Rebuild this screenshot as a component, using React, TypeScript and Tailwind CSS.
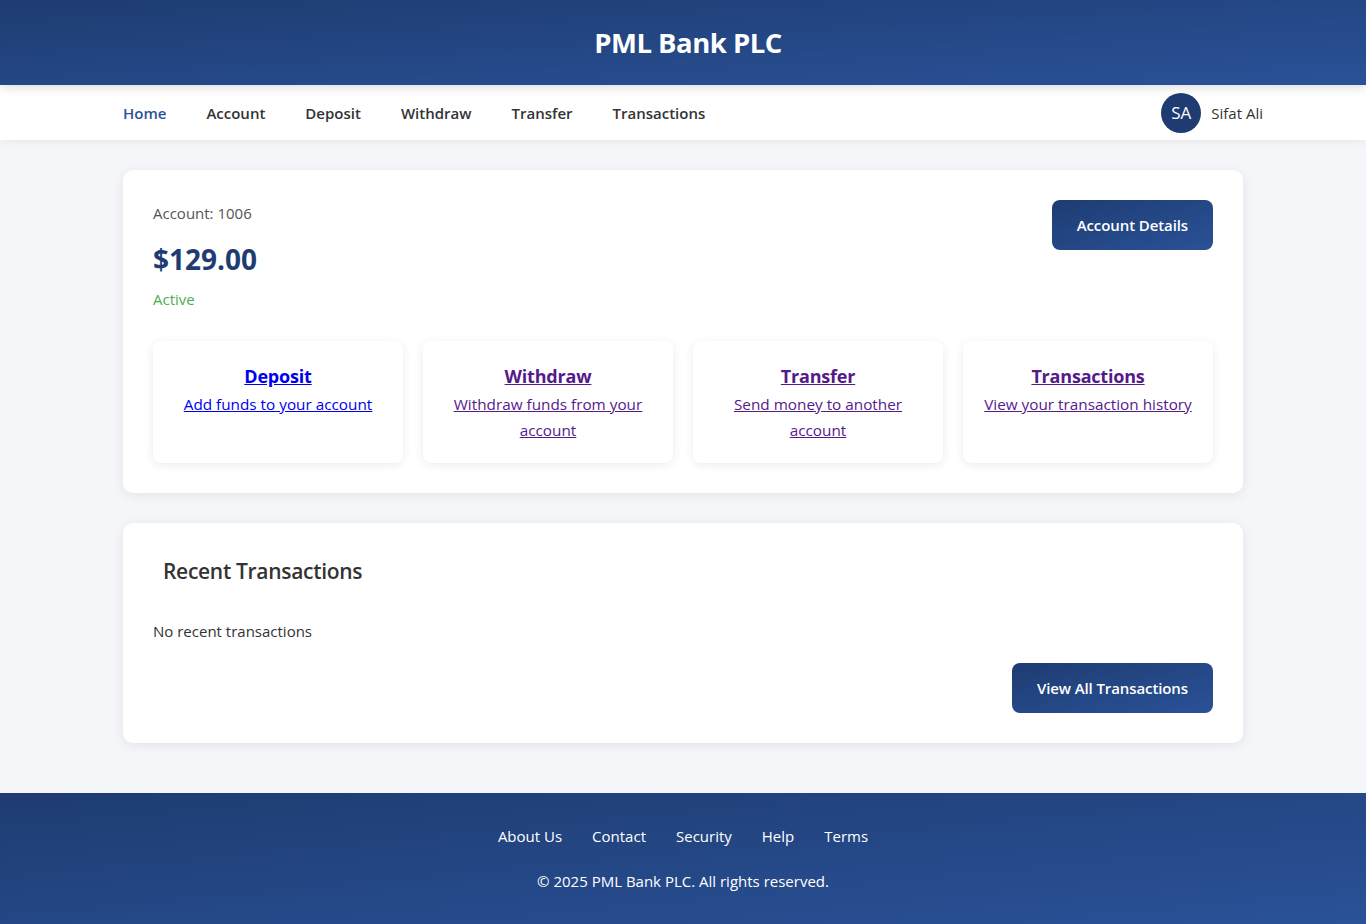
import React from "react";

const navLinks = ["Home", "Account", "Deposit", "Withdraw", "Transfer", "Transactions"];

const actions = [
  { title: "Deposit", desc: "Add funds to your account", visited: false },
  { title: "Withdraw", desc: "Withdraw funds from your account", visited: true },
  { title: "Transfer", desc: "Send money to another account", visited: true },
  { title: "Transactions", desc: "View your transaction history", visited: true },
];

const footerLinks = ["About Us", "Contact", "Security", "Help", "Terms"];

const App = () => {
  return (
    <div
      className="min-h-screen bg-[#f5f6fa] text-[#333] leading-[1.6]"
      style={{ fontFamily: '"Open Sans", "Noto Sans", sans-serif' }}
    >
      <header className="relative z-10 h-[85px] flex items-center justify-center pl-[10px] bg-gradient-to-br from-[#1e3c72] to-[#2a5298] shadow-[0_2px_10px_rgba(0,0,0,0.15)]">
        <h1 className="text-[27.5px] font-bold text-white tracking-[-0.5px]">PML Bank PLC</h1>
      </header>

      <nav className="h-[55px] bg-white flex items-center justify-between pl-[123px] pr-[103px] shadow-[0_2px_10px_rgba(0,0,0,0.06)]">
        <div className="flex gap-[40px]">
          {navLinks.map((link) => (
            <a
              key={link}
              href="#"
              className={`text-[15px] font-semibold ${
                link === "Home" ? "text-[#2a5298]" : "text-[#333]"
              }`}
            >
              {link}
            </a>
          ))}
        </div>
        <div className="flex items-center gap-[10px]">
          <div className="w-[40px] h-[40px] rounded-full bg-[#1e3c72] text-white flex items-center justify-center text-[17px]">
            SA
          </div>
          <span className="text-[15px] text-[#333]">Sifat Ali</span>
        </div>
      </nav>

      <main className="w-[1120px] mx-auto pt-[30px] pb-[50px] flex flex-col gap-[30px]">
        <section className="bg-white rounded-[10px] p-[30px] shadow-[0_2px_12px_rgba(0,0,0,0.08)]">
          <div className="flex justify-between items-start">
            <div>
              <p className="text-[15px] leading-[26px] text-[#555]">Account: 1006</p>
              <p className="text-[28px] font-bold leading-[36px] text-[#1e3c72] mt-[15px] mb-[9px]">
                $129.00
              </p>
              <p className="text-[15px] leading-[26px] text-[#4caf50]">Active</p>
            </div>
            <button className="h-[50px] px-[25px] rounded-[8px] bg-gradient-to-br from-[#1e3c72] to-[#2a5298] text-white text-[15px] font-semibold tracking-[-0.1px]">
              Account Details
            </button>
          </div>

          <div className="grid grid-cols-4 gap-[20px] mt-[29px]">
            {actions.map((a) => (
              <a
                key={a.title}
                href="#"
                className={`block bg-white rounded-[8px] p-[20px] text-center underline shadow-[0_2px_10px_rgba(0,0,0,0.08)] ${
                  a.visited ? "text-[#551a8b]" : "text-[#0000ee]"
                }`}
              >
                <h3 className="text-[18px] font-bold leading-[30px] tracking-[-0.2px]">{a.title}</h3>
                <p className="text-[15.3px] leading-[26px]">{a.desc}</p>
              </a>
            ))}
          </div>
        </section>

        <section className="bg-white rounded-[10px] p-[30px] shadow-[0_2px_12px_rgba(0,0,0,0.08)]">
          <h2 className="text-[21px] font-semibold leading-[36px] pl-[10px] text-[#333] tracking-[-0.3px]">
            Recent Transactions
          </h2>
          <p className="text-[15px] leading-[26px] mt-[29px] text-[#333]">No recent transactions</p>
          <div className="flex justify-end mt-[19px]">
            <button className="h-[50px] px-[25px] rounded-[8px] bg-gradient-to-br from-[#1e3c72] to-[#2a5298] text-white text-[15px] font-semibold tracking-[-0.1px]">
              View All Transactions
            </button>
          </div>
        </section>
      </main>

      <footer className="bg-gradient-to-br from-[#1e3c72] to-[#2a5298] text-white py-[30px] flex flex-col items-center gap-[19px]">
        <div className="flex gap-[30px]">
          {footerLinks.map((l) => (
            <a key={l} href="#" className="text-[15px] leading-[26px] text-white">
              {l}
            </a>
          ))}
        </div>
        <p className="text-[15px] leading-[26px]">© 2025 PML Bank PLC. All rights reserved.</p>
      </footer>
    </div>
  );
};

export default App;
